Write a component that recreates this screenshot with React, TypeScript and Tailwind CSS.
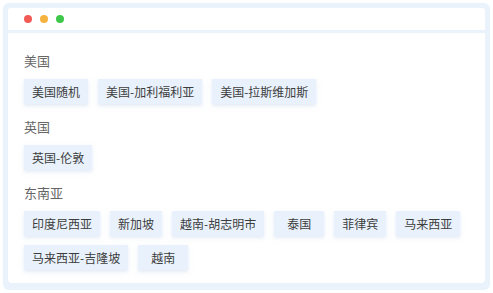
import React from "react";

const sections: { title: string; items: string[] }[] = [
  { title: "美国", items: ["美国随机", "美国-加利福利亚", "美国-拉斯维加斯"] },
  { title: "英国", items: ["英国-伦敦"] },
  {
    title: "东南亚",
    items: ["印度尼西亚", "新加坡", "越南-胡志明市", "泰国", "菲律宾", "马来西亚", "马来西亚-吉隆坡", "越南"],
  },
];

export default function App() {
  return (
    <div
      className="w-[493px] h-[293px] bg-white p-[3px]"
      style={{ fontFamily: '"Noto Sans CJK SC", "Noto Sans", sans-serif' }}
    >
      <div className="w-[487px] h-[287px] rounded-[6px] bg-[#eaf2fc] pt-[5px] pl-[5px] pr-[5px] pb-[7px] flex flex-col">
        <div className="h-[22px] bg-white rounded-t-[3px] flex items-center pl-[16px] gap-[8px] shrink-0">
          <span className="w-[8px] h-[8px] rounded-full bg-[#f25b55]" />
          <span className="w-[8px] h-[8px] rounded-full bg-[#f4b33f]" />
          <span className="w-[8px] h-[8px] rounded-full bg-[#3ec74b]" />
        </div>
        <div className="mt-[3px] flex-1 bg-white rounded-b-[4px] pt-[18px] pl-[16px] pr-[12px]">
          {sections.map((s) => (
            <div key={s.title} className="mb-[13px]">
              <div className="h-[20px] leading-[20px] text-[13px] text-[#666]">{s.title}</div>
              <div className="mt-[8px] flex flex-wrap gap-x-[10px] gap-y-[9px]">
                {s.items.map((it) => (
                  <div
                    key={it}
                    className="h-[25px] min-w-[50px] px-[8px] flex items-center justify-center bg-[#e9f2fc] text-[12px] text-[#3d3d3d] shadow-[0_2px_4px_rgba(200,215,235,0.5)]"
                  >
                    {it}
                  </div>
                ))}
              </div>
            </div>
          ))}
        </div>
      </div>
    </div>
  );
}
